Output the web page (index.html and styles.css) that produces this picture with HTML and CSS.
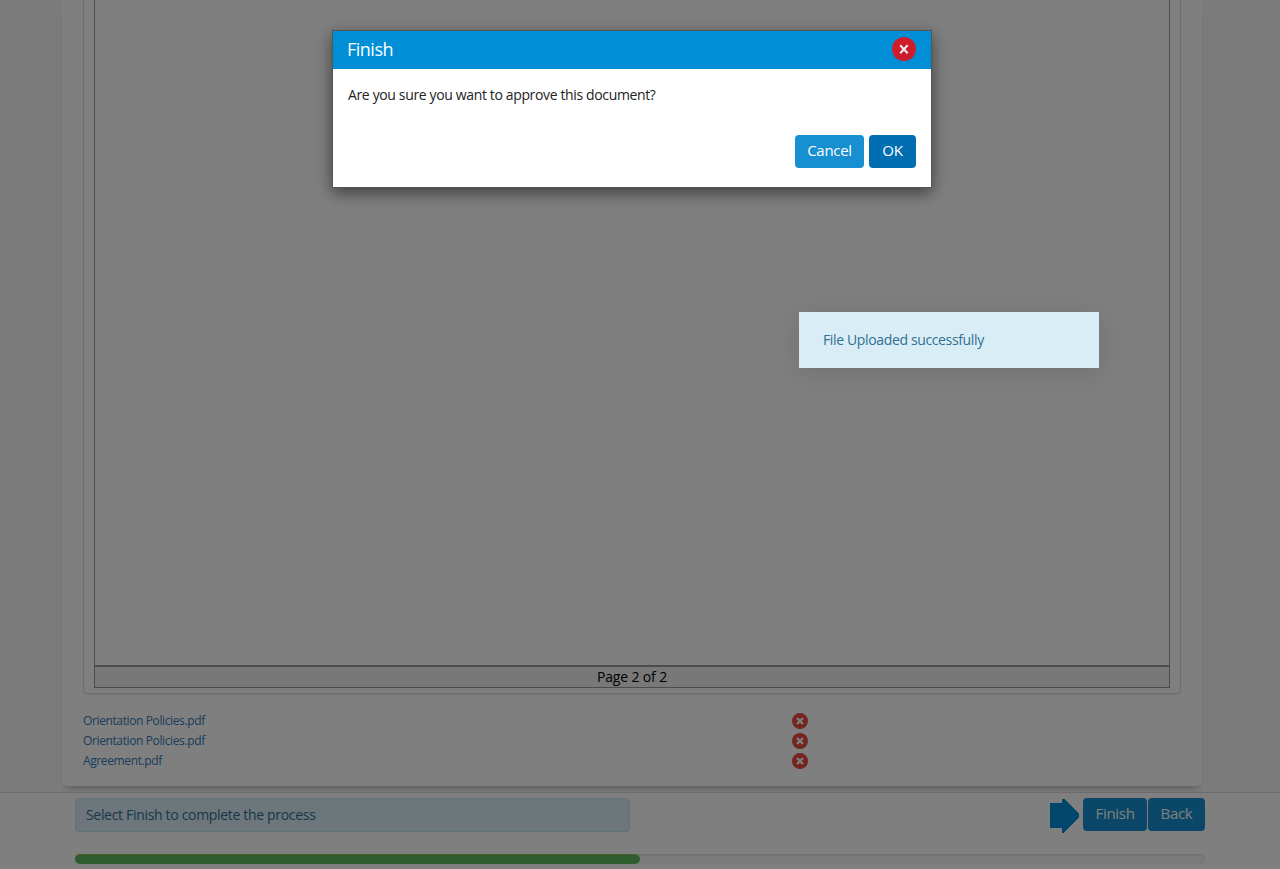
FILE: index.html
```html
<!DOCTYPE html>
<html lang="en">
<head>
<meta charset="utf-8">
<title>Finish</title>
<link rel="stylesheet" href="styles.css">
</head>
<body>
<div class="page">
  <main class="card">
    <section class="panel">
      <div class="viewer">
        <div class="document"></div>
        <div class="page-count"><span>Page 2 of 2</span></div>
      </div>
    </section>
    <ul class="files">
      <li><a>Orientation Policies.pdf</a><svg class="remove" viewBox="0 0 16 16"><circle cx="8" cy="8" r="8"/><path d="M5 5l6 6M11 5l-6 6"/></svg></li>
      <li><a>Orientation Policies.pdf</a><svg class="remove" viewBox="0 0 16 16"><circle cx="8" cy="8" r="8"/><path d="M5 5l6 6M11 5l-6 6"/></svg></li>
      <li><a>Agreement.pdf</a><svg class="remove" viewBox="0 0 16 16"><circle cx="8" cy="8" r="8"/><path d="M5 5l6 6M11 5l-6 6"/></svg></li>
    </ul>
  </main>
  <footer class="footer">
    <div class="actions">
      <div class="hint"><span>Select Finish to complete the process</span></div>
      <svg class="arrow" viewBox="0 0 30 34" shape-rendering="crispEdges"><path d="M0 4h12V0h2l15 15v3L14 34h-2v-5H0z"/></svg>
      <button class="btn finish">Finish</button>
      <button class="btn back">Back</button>
    </div>
    <div class="progress"><div class="bar" style="width:50%"></div></div>
  </footer>
</div>
<div class="backdrop"></div>
<div class="dialog">
  <header class="dialog-head"><span>Finish</span><svg class="close" viewBox="0 0 24 24"><circle cx="12" cy="12" r="12"/><path d="M8.2 8.2l7.4 8M15.6 8.2l-7.4 8"/></svg></header>
  <p class="dialog-text"><span>Are you sure you want to approve this document?</span></p>
  <div class="dialog-actions">
    <button class="btn cancel">Cancel</button>
    <button class="btn ok">OK</button>
  </div>
</div>
<div class="toast"><span>File Uploaded successfully</span></div>
</body>
</html>
```
FILE: styles.css
```css
* { box-sizing: border-box; }
body { margin: 0; height: 869px; overflow: hidden; font-family: "Open Sans", "Noto Sans", sans-serif; font-size: 14px; }
.page { height: 869px; display: flex; flex-direction: column; background: #f7f7f7; }
.card { height: 786px; margin: 0 78px 0 62px; padding: 0 21px; background: #fff; border-radius: 0 0 6px 6px; box-shadow: 0 6px 6px -4px rgba(0,0,0,.28); display: flex; flex-direction: column; }
.panel { height: 694px; padding: 0 10px 5px; border: 1px solid #ddd; border-top: 0; border-radius: 0 0 4px 4px; box-shadow: 0 1px 1px rgba(0,0,0,.08); }
.viewer { height: 688px; border: 1px solid #999; border-top: 0; display: flex; flex-direction: column; }
.document { flex: 1; }
.page-count { height: 22px; border-top: 2px solid #999; background: #f0f0f0; display: flex; align-items: center; justify-content: center; color: #000; line-height: 20px; letter-spacing: -.15px; }
.files { list-style: none; margin: 17px 0 0; padding: 0; font-size: 12px; }
.files li { height: 20px; display: flex; align-items: center; color: #337ab7; letter-spacing: -.38px; }
.files a { width: 709px; padding-bottom: 2px; }
.remove { width: 16px; height: 16px; }
.remove circle { fill: #e94b3f; }
.remove path { stroke: #fff; stroke-width: 2.3; }
.footer { flex: 1; margin-top: 6px; padding: 5px 75px 0; background: #fff; border-top: 1px solid #d8d8d8; position: relative; }
.actions { display: flex; align-items: flex-start; height: 56px; }
.hint { width: 555px; height: 34px; padding: 0 10px; border: 1px solid #bce8f1; border-radius: 4px; background: #d9edf7; color: #31708f; line-height: 32px; letter-spacing: -.32px; }
.arrow { width: 30px; height: 34px; margin: 1px 3px 0 auto; fill: #008fd7; }
.btn { height: 33px; border: 0; border-radius: 4px; padding: 0 0 2px; background: #178fd0; color: #fff; font: 15px/31px "Open Sans", sans-serif; letter-spacing: -.3px; }
.finish { width: 64px; margin-right: 1px; }
.back { width: 57px; }
.progress { height: 10px; border-radius: 4px; background: #f5f5f5; box-shadow: inset 0 1px 2px rgba(0,0,0,.12); }
.bar { height: 10px; background: #5cb85c; border-radius: 5px; border-top: 1px solid #8fc04d; }
.backdrop { position: absolute; inset: 0; background: rgba(0,0,0,.5); }
.dialog { position: absolute; left: 332px; top: 30px; width: 600px; height: 158px; border: 1px solid #555; background: #fff; box-shadow: 0 5px 15px rgba(0,0,0,.5); }
.dialog-head { height: 38px; padding: 0 15px 2px 14px; background: #008fd7; color: #fff; display: flex; justify-content: space-between; align-items: center; font-size: 18px; line-height: 36px; letter-spacing: -.5px; }
.close { width: 24px; height: 24px; }
.close circle { fill: #cd1d2b; }
.close path { stroke: #e9edf3; stroke-width: 2; }
.dialog-text { margin: 15px 15px 30px; height: 21px; line-height: 21px; color: #222; letter-spacing: -.36px; }
.dialog-actions { display: flex; justify-content: flex-end; gap: 5px; padding-right: 15px; }
.cancel { width: 69px; }
.ok { width: 47px; background: #006eb1; }
.toast { position: absolute; left: 799px; top: 312px; width: 300px; height: 56px; padding: 0 24px; background: #d9edf7; color: #31708f; line-height: 56px; letter-spacing: -.36px; box-shadow: 0 5px 30px rgba(0,0,0,.12); }
```
